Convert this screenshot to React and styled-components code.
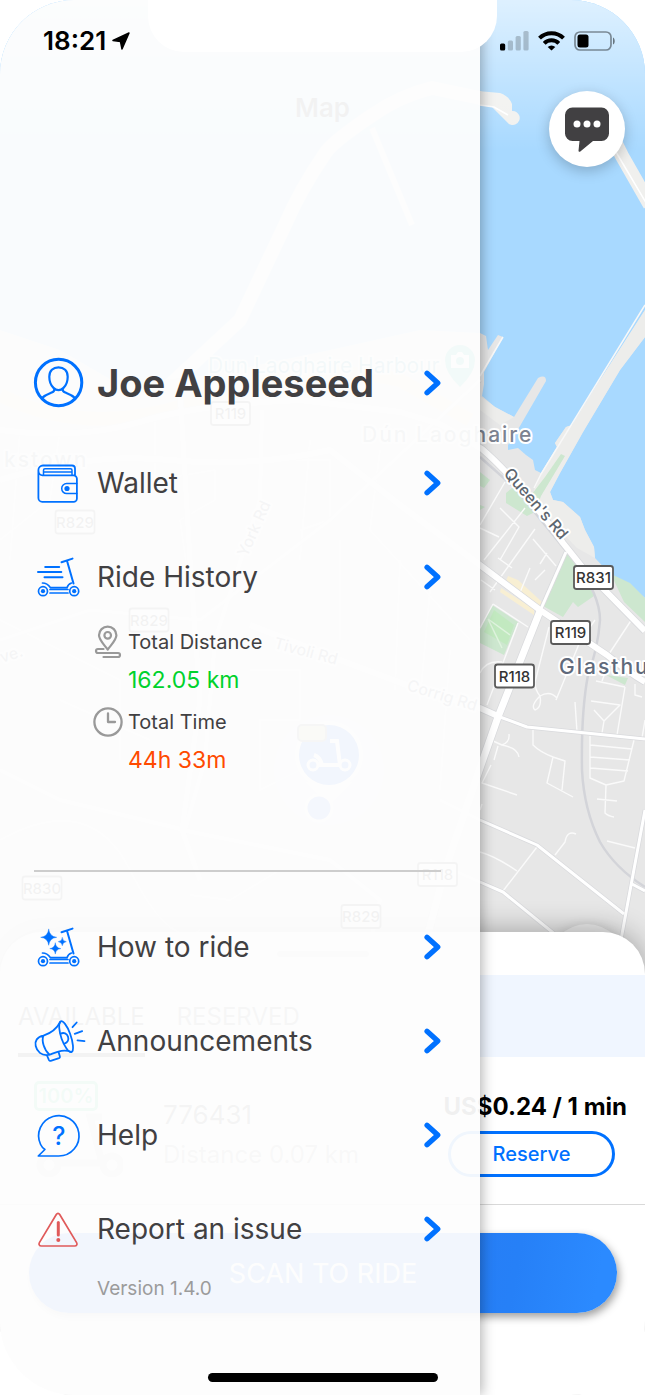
import React from "react";
import styled, { createGlobalStyle } from "styled-components";

const blue = "#0071ff";
const ink = "#414042";

const GlobalStyle = createGlobalStyle`
  *, *::before, *::after { box-sizing: border-box; }
  body {
    margin: 0;
    background: #fff;
    color: ${ink};
    font-family: Inter, "Liberation Sans", sans-serif;
  }
  a { color: inherit; text-decoration: none; }
  button { font: inherit; border: 0; padding: 0; cursor: pointer; }
  svg { display: block; }
`;

/* ---------- shell ---------- */

const Screen = styled.div`
  position: relative;
  display: grid;
  grid-template-columns: minmax(0, 1fr);
  min-height: 100vh;
  overflow: hidden;
  border-radius: 74px;
  background: #fff;
`;

const RideView = styled.main`
  grid-area: 1 / 1;
  display: flex;
  flex-direction: column;
`;

const MapArea = styled.section`
  position: relative;
  flex: 1;
  min-height: 600px;
  background: #a8d9ff;
`;

const MapCanvas = styled.svg`
  position: absolute;
  inset: 0;
  width: 100%;
  height: 100%;
`;

const MapTitle = styled.h1`
  position: relative;
  margin: 0;
  padding-top: 90px;
  text-align: center;
  font-size: 26px;
  line-height: 36px;
  font-weight: 600;
  color: #333;
`;

const RoundButton = styled.button`
  position: absolute;
  right: 20px;
  ${(p) => (p.$low ? "bottom: -20px;" : "top: 91px;")}
  display: grid;
  place-items: center;
  width: 76px;
  height: 76px;
  border-radius: 50%;
  background: ${(p) => (p.$low ? "#ebebeb" : "#fff")};
  box-shadow: 0 4px 14px rgba(0, 0, 0, 0.22);
`;

/* ---------- map labels ---------- */

const TownLabel = styled.text`
  font-size: 21px;
  font-weight: 500;
  letter-spacing: 2px;
  fill: ${(p) => p.$tone || "#606a7b"};
  stroke: #fff;
  stroke-width: 4px;
  stroke-linejoin: round;
  paint-order: stroke;
`;

const RoadLabel = styled.text`
  font-size: 16px;
  font-weight: 500;
  fill: #5d666f;
  stroke: #fff;
  stroke-width: 4px;
  stroke-linejoin: round;
  paint-order: stroke;
`;

const PlaceLabel = styled.text`
  font-size: 21px;
  fill: #3a9bb0;
  stroke: #fff;
  stroke-width: 3px;
  paint-order: stroke;
`;

const ShieldText = styled.text`
  font-size: 15px;
  font-weight: 500;
  text-anchor: middle;
  fill: #333;
`;

/* ---------- bottom sheet ---------- */

const Sheet = styled.section`
  position: relative;
  margin-top: -48px;
  padding-bottom: 82px;
  border-radius: 42px 42px 0 0;
  background: #fff;
  box-shadow: 0 -2px 28px rgba(0, 0, 0, 0.3);
`;

const Grip = styled.div`
  display: flex;
  justify-content: center;
  align-items: center;
  height: 43px;
  &::before {
    content: "";
    width: 92px;
    height: 6px;
    border-radius: 3px;
    background: #ccc;
  }
`;

const Tabs = styled.div`
  display: flex;
  gap: 32px;
  height: 82px;
  padding-left: 18px;
  background: #f0f6ff;
`;

const Tab = styled.button`
  background: none;
  padding-top: 4px;
  border-bottom: 4px solid ${(p) => (p.$on ? "#444" : "transparent")};
  color: ${(p) => (p.$on ? "#555" : "#777")};
  font-size: 24px;
`;

const RideCard = styled.article`
  display: flex;
  justify-content: space-between;
  height: 148px;
  padding: 24px 18px 0 34px;
  border-bottom: 1px solid #d9d9d9;
`;

const Vehicle = styled.div`
  display: flex;
  gap: 40px;
`;

const VehicleArt = styled.div`
  width: 89px;
`;

const Charge = styled.div`
  width: 64px;
  height: 30px;
  border: 3px solid #3bcf8e;
  border-radius: 5px;
  color: #3bcf8e;
  font-size: 20px;
  line-height: 24px;
  font-weight: 600;
  text-align: center;
`;

const VehicleInfo = styled.div`
  width: 240px;
  padding-top: 14px;
  white-space: nowrap;
  font-size: 26px;
  line-height: 40px;
  color: #555;
  small { display: block; font-size: 24px; color: #999; }
`;

const Pricing = styled.div`
  display: flex;
  flex-direction: column;
  align-items: flex-end;
  gap: 8px;
  padding-top: 10px;
  white-space: nowrap;
  font-size: 24px;
  line-height: 32px;
  font-weight: 700;
  color: #000;
`;

const ReserveButton = styled.button`
  width: 167px;
  height: 46px;
  margin-right: 12px;
  border: 3px solid ${blue};
  border-radius: 23px;
  background: #fff;
  color: ${blue};
  font-size: 20px;
  font-weight: 500;
`;

const ScanButton = styled.button`
  display: block;
  width: calc(100% - 57px);
  height: 80px;
  margin: 28px 28px 0 29px;
  border-radius: 40px;
  background: linear-gradient(100deg, #2b6ff0, #2680f7 82%, #2b8aff 96%);
  box-shadow: 2px 4px 8px rgba(0, 0, 0, 0.38);
  color: #fff;
  font-size: 27px;
`;

/* ---------- drawer ---------- */

const Drawer = styled.aside`
  grid-area: 1 / 1;
  position: relative;
  width: calc(100% - 165px);
  padding: 330px 39px 90px 34px;
  background: rgba(253, 253, 253, 0.95);
  box-shadow: 2px 0 12px rgba(0, 0, 0, 0.3);
`;

const MenuRow = styled.a`
  display: grid;
  grid-template-columns: 50px 1fr auto;
  align-items: center;
  column-gap: 13px;
  height: ${(p) => (p.$profile ? "106px" : "94px")};
  white-space: nowrap;
  font-size: ${(p) => (p.$profile ? "38px" : "28px")};
  font-weight: ${(p) => (p.$profile ? 700 : 400)};
`;

const Stats = styled.dl`
  display: grid;
  row-gap: 4px;
  margin: 0;
  padding-left: 59px;
`;

const StatName = styled.dt`
  display: flex;
  align-items: center;
  gap: 5px;
  height: 36px;
  font-size: 20px;
`;

const StatValue = styled.dd`
  margin: 0;
  padding-left: 35px;
  font-size: 23px;
  line-height: 40px;
  color: ${(p) => p.$tone};
`;

const Rule = styled.hr`
  height: 2px;
  margin: 90px 0 28px;
  border: 0;
  background: #cdcdcd;
`;

const Version = styled.p`
  margin: 0;
  padding-left: 63px;
  font-size: 19px;
  line-height: 26px;
  color: #9b9b9b;
`;

/* ---------- device chrome ---------- */

const StatusBar = styled.header`
  position: absolute;
  inset: 0 0 auto 0;
  display: grid;
  grid-template-columns: 1fr 349px 1fr;
  height: 52px;
  color: #000;
`;

const StatusSide = styled.div`
  display: flex;
  align-items: center;
  gap: ${(p) => (p.$end ? "9px" : "6px")};
  padding: 30px 0 0 ${(p) => (p.$end ? "3px" : "43px")};
  font-size: 26px;
  line-height: 22px;
  font-weight: 600;
`;

const Notch = styled.div`
  border-radius: 0 0 36px 36px;
  background: #fff;
`;

const HomeBar = styled.div`
  position: absolute;
  bottom: 13px;
  left: 50%;
  width: 230px;
  height: 9px;
  border-radius: 5px;
  background: #000;
  transform: translateX(-50%);
`;

/* ---------- icons ---------- */

const LineIcon = ({ color = blue, width = 1.8, children }) => (
  <svg width="50" height="50" viewBox="0 0 50 50" fill="none" stroke={color} strokeWidth={width} strokeLinecap="round" strokeLinejoin="round" overflow="visible" aria-hidden="true">
    {children}
  </svg>
);

const PersonIcon = () => (
  <LineIcon width={2.2}>
    <circle cx="24.6" cy="24.5" r="23.2" strokeWidth="3" />
    <path d="M24.5 9.3c-5.4 0-9.2 3.6-9.2 9.4 0 4.6 1.8 8.8 4.2 11.2 1.6 1.6 3.2 2.3 5 2.3s3.4-.7 5-2.3c2.4-2.4 4.2-6.6 4.2-11.2 0-5.8-3.8-9.4-9.2-9.4z" />
    <path d="M20.3 31c.4 1.7-.8 2.800-2.600 3.600-3.300 1.400-6.700 2.500-9.200 5M28.700 31c-.4 1.700.8 2.800 2.600 3.600 3.300 1.400 6.700 2.500 9.200 5" />
  </LineIcon>
);

const WalletIcon = () => (
  <LineIcon width={1.8}>
    <path d="M41 17.3V10.5a3 3 0 0 0-3-3H9a4.6 4.6 0 0 0-4.6 4.6V40a3.8 3.8 0 0 0 3.8 3.8h31.3a3.4 3.4 0 0 0 3.4-3.4V20.7a3.4 3.4 0 0 0-3.4-3.4H8.5a4 4 0 0 1-4-4" />
    <path d="M9.500 17V12.300a1.500 1.500 0 0 1 1.500-1.500h25.500a1.500 1.500 0 0 1 1.500 1.500V17M10 14h27.500M42.800 25.600H32.700a5 5 0 0 0 0 10h10.100" strokeWidth="1.500" />
    <circle cx="33" cy="30.500" r="2.600" fill={blue} stroke="none" />
  </LineIcon>
);

const ScooterBody = () => (
  <>
    <circle cx="9" cy="39.2" r="4.5" />
    <circle cx="9" cy="39.2" r="2.1" fill={blue} stroke="none" />
    <circle cx="40.2" cy="39.2" r="4.5" />
    <circle cx="40.2" cy="39.2" r="2.1" fill={blue} stroke="none" />
    <path d="M8.5 31c4.600 0 6.300 2.300 8 4.700h16.500c.7-2.500 2.300-4 4.500-4.700M16 37.500h18M16 41h18" />
    <path d="M39.500 31.500 33 8.700M27.500 10.300l11-3.700" strokeWidth="2" />
  </>
);

const RideIcon = () => (
  <LineIcon width={1.7}>
    <ScooterBody />
    <path d="M11.2 15h14M4 20h23.3M10.5 25.2h18" strokeWidth="2" />
  </LineIcon>
);

const star = (x, y, r) => {
  const k = r * 0.2;
  return `M${x} ${y - r}Q${x + k / 2} ${y - k / 2} ${x + r} ${y}Q${x + k / 2} ${y + k / 2} ${x} ${y + r}Q${x - k / 2} ${y + k / 2} ${x - r} ${y}Q${x - k / 2} ${y - k / 2} ${x} ${y - r}z`;
};

const HowToIcon = () => (
  <LineIcon width={1.7}>
    <ScooterBody />
    <path d={star(14.7, 15.3, 8) + star(28.3, 19.7, 4) + star(21.3, 26.6, 5.5)} fill={blue} strokeWidth=".4" />
  </LineIcon>
);

const MegaphoneIcon = () => (
  <LineIcon width={1.8}>
    <path d="M26.5 5.5c2.200-1.800 6.600 4 9.600 12.200s4.100 17.200 1.400 18.300c-2.700 1-7.300-6-9.900-13.300S24.300 7.300 26.500 5.500z" />
    <path d="M26.300 6C22 14 16 17.500 9.500 19.600M37.500 36c-8.500-3.400-15.500.4-22 2.700M9.500 19.600C3 20.800.6 25 1.700 30s5.500 10.500 13.800 8.700M9.500 19.600c-2.300 5 .6 14.500 6 19.100" />
    <path d="M13 39.500l2 4.600c.4.700.9.900 1.700.7l8.300-2.700c.8-.3 1.100-.8.900-1.600l-1.300-4.200M26.500 17.700c3.400-1.600 6.400-.2 7.500 2.900 1.100 3.200-.3 6-3.500 7M38.500 11.200 42.700 6.500M40.700 17.800l7.500-2.700M43.500 24.400l7 .8" />
  </LineIcon>
);

const HelpMark = styled.text`
  font-size: 25px;
  font-weight: 500;
  text-anchor: middle;
  fill: ${blue};
  stroke: none;
`;

const HelpIcon = () => (
  <LineIcon width={1.7}>
    <path d="M24.8 46A20.2 20.2 0 1 0 6.6 34.5c1 2.2 2.3 3.6 4.3 5L4.300 46z" />
    <HelpMark x="24.8" y="35">?</HelpMark>
  </LineIcon>
);

const WarningIcon = () => (
  <LineIcon color="#e05a5a" width={1.7}>
    <path d="M22.300 10.500 5.400 38.600c-1 1.700-.1 3.400 1.900 3.400h33.400c2 0 2.900-1.700 1.900-3.400L25.700 10.500c-.9-1.500-2.500-1.500-3.400 0z" />
    <path d="M24.3 18.5V31" strokeWidth="3" />
    <circle cx="24.3" cy="36" r="2" fill="#e05a5a" stroke="none" />
  </LineIcon>
);

const Chevron = () => (
  <svg width="18" height="28" viewBox="0 0 18 28" fill="none" stroke={blue} strokeWidth="5.2" strokeLinecap="round" strokeLinejoin="round" aria-hidden="true">
    <path d="M4 4.200l10.800 9.800L4 23.800" />
  </svg>
);

const DistanceIcon = () => (
  <svg width="30" height="34" viewBox="0 0 30 34" fill="none" stroke="#999" strokeWidth="2.2" strokeLinecap="round" strokeLinejoin="round" aria-hidden="true">
    <path d="M14.7 24.5C11 19.5 6 15 6 10.3a8.7 8.7 0 0 1 17.4 0c0 4.7-5 9.2-8.7 14.2z" />
    <circle cx="14.7" cy="10.3" r="3.3" />
    <path d="M10.500 24H5a2 2 0 0 0 0 4h20a2 2 0 0 1 0 4H10.500" />
  </svg>
);

const ClockIcon = () => (
  <svg width="30" height="30" viewBox="0 0 30 30" fill="none" stroke="#999" strokeWidth="2.3" strokeLinecap="round" strokeLinejoin="round" aria-hidden="true">
    <circle cx="15" cy="15" r="13.6" />
    <path d="M15 6.500V15h7" />
  </svg>
);

const ChatIcon = () => (
  <svg width="46" height="46" viewBox="0 0 46 46" aria-hidden="true">
    <path d="M8.5 1.500h29a7.500 7.500 0 0 1 7.500 7.500v18.500a7.500 7.500 0 0 1-7.500 7.500H29L16 45.700q-1.500.5-1.500-1L15.500 35h-7A7.500 7.500 0 0 1 1 27.500V9a7.500 7.500 0 0 1 7.500-7.500z" fill={ink} />
    <g fill="#fff">
      <circle cx="13" cy="18" r="3.5" />
      <circle cx="23" cy="18" r="3.5" />
      <circle cx="33" cy="18" r="3.5" />
    </g>
  </svg>
);

const LocationIcon = () => (
  <svg width="18" height="18" viewBox="0 0 18 18" aria-hidden="true">
    <path d="M17 1 10 17 8.500 9.500 1 8.500z" fill="#000" stroke="#000" strokeWidth="1.5" strokeLinejoin="round" />
  </svg>
);

const SignalIcon = () => (
  <svg width="29" height="20" viewBox="0 0 29 20" fill="rgba(0,0,0,.2)" aria-hidden="true">
    <rect x="0" y="12.5" width="5.2" height="7" rx="1.5" fill="#000" />
    <rect x="7.8" y="9.5" width="5.2" height="10" rx="1.5" />
    <rect x="15.6" y="5" width="5.2" height="14.5" rx="1.5" />
    <rect x="23.4" y="0" width="5.2" height="19.5" rx="1.5" />
  </svg>
);

const WifiIcon = () => (
  <svg width="27" height="20" viewBox="0 0 27 20" fill="none" stroke="#000" strokeWidth="4" aria-hidden="true">
    <path d="M1.500 7.100a17 17 0 0 1 24 0M6.200 12.300a10.400 10.400 0 0 1 14.600 0" />
    <path d="M13.500 19.500 9.700 15.900a5.500 5.500 0 0 1 7.600 0z" fill="#000" stroke="none" />
  </svg>
);

const BatteryIcon = () => (
  <svg width="42" height="20" viewBox="0 0 42 20" fill="none" aria-hidden="true">
    <rect x="1" y="1" width="36" height="18" rx="5" stroke="#000" strokeOpacity=".42" strokeWidth="1.7" />
    <rect x="3.5" y="3.5" width="11" height="13" rx="2.5" fill="#000" />
    <path d="M39 6.500c2.300 1 2.300 6 0 7z" fill="#000" fillOpacity=".5" />
  </svg>
);

const ParkedScooter = () => (
  <svg width="89" height="66" viewBox="0 0 89 66" fill="none" stroke="#ccc" strokeWidth="7" aria-hidden="true">
    <circle cx="15" cy="54" r="9" />
    <circle cx="78" cy="54" r="9" />
    <path d="M24 52h44L56 6h12" />
  </svg>
);

/* ---------- map ---------- */

const shields = [
  ["R831", 593.5, 577.5],
  ["R119", 570.5, 632.5],
  ["R118", 514.5, 676],
  ["R119", 230.5, 413.5],
  ["R829", 75, 522],
  ["R829", 149, 620],
  ["R830", 42, 888],
  ["R118", 437.5, 874.5],
  ["R829", 361, 916.5],
];

const mainRoads = [
  ["M566 552L540 611", 3],
  ["M0 430Q80 440 140 422T300 400L400 412L440 424L482 449Q518 480 563 543L583 568L645 631", 6],
  ["M0 480Q90 452 170 460T330 450L400 505L480 565L540 610L607 655Q628 672 645 682", 6],
  ["M540 611L498 717L480 768L445 870L425 945", 7],
  ["M180 390L190 560L200 700L182 830L200 880", 5],
  ["M262 410L260 500L215 640L205 760L185 830L60 800L0 770", 4],
  ["M250 625L340 660L420 690L480 708L500 717", 6],
  ["M500 717L527 727L645 739", 3],
  ["M0 640L90 610L200 620L330 520L480 380", 3],
  ["M182 830L330 860L380 900L370 945", 4],
  ["M440 800L480 820L537 845L624 914", 3],
  ["M430 860L480 882L503 892L562 940", 3],
  ["M645 810L632 880L620 945M632 884L645 891", 3],
];

const lanes =
  "M480 525L505 482M484 560L525 508M500 508L519 527L500 560M480 528L499 537M498 558L512 568M533 539L556 566M547 553L540 564M519 595L530 568M481 580L495 590M493 604L528 627M493 604L480 628M518 623L487 705M549 627L535 682Q535 690 540 696Q542 708 535 710Q530 706 540 696Q550 690 557 698M579 644L556 700M480 673Q486 660 502 662M575 702L577 732M533 730L533 745Q540 752 553 757L547 783L573 797M553 757L565 761L562 790M493 741L502 745Q510 742 509 734M502 745Q518 748 519 757M498 746L494 760M491 765L482 783L517 795M480 810L482 804M590 736L590 778L606 785L624 781L634 740M590 745L632 749M590 757L630 760M590 768L628 771M606 785L605 813Q608 816 614 817M597 799L617 801M555 855L565 842Q567 830 576 834M537 847L503 891M480 852Q495 856 517 871M607 841L635 848M607 657L632 619M595 620L588 630M596 681L625 687M591 701L620 705L604 721L594 710M604 721L602 733M625 687L617 735M635 684L635 695L642 697M645 720L642 738M602 681L607 668M535 529L490 592M535 580L545 570";

const hiddenLanes =
  "M20 430L10 560M60 430L50 500L0 540M155 420V480L215 470V500L180 520L190 590M260 460H330V520L300 530M310 440L300 560M380 450L370 530L470 640M0 620L120 680V760M250 670H300V720H260V790L300 770M400 560L395 690M430 590L420 700M340 540V640M0 840Q90 790 130 870T200 930M280 870L230 900L190 895M450 650L440 790M60 700L150 740";

const CityMap = () => (
  <MapCanvas viewBox="0 0 645 980" preserveAspectRatio="xMinYMin slice" role="img" aria-label="Map of Dún Laoghaire">
    <defs>
      <linearGradient id="haze" x1="0" y1="0" x2="0" y2="1">
        <stop offset="0" stopColor="#fff" stopOpacity=".62" />
        <stop offset="1" stopColor="#fff" stopOpacity="0" />
      </linearGradient>
    </defs>
    <rect width="645" height="980" fill="#a8d9ff" />
    <g fill="none" stroke="#f0f0ee" strokeLinejoin="round">
      <path d="M480 98L432 88Q400 96 374 114Q335 140 326 152Q300 190 285 225L240 320L170 385" strokeWidth="14" />
      <path d="M372 128L412 225" strokeWidth="6" />
      <path d="M612 136L622 156L650 205" strokeWidth="14" />
    </g>
    <path d="M478 91L500 93Q509 96 512 104L512 111A7 7 0 1 1 507 122L492 107L478 105Z" fill="#f0f0ee" />
    <path d="M480 105L494 107L508 115M616 152L648 206" fill="none" stroke="#fff" strokeWidth="1.500" />
    <path
      d="M0 330L60 350L120 385L210 375L330 350L420 330L480 333L486 336L488 350L498 335L503 337L484 372V384L482 396L495 407L514 417L538 378Q546 374 546 381L520 426L508 445V450L518 448L526 455L533 460L535 470L541 473L557 447L555 443L566 427L572 425L598 383L601 379L645 310V337L620 370L583 432L560 473L550 492L553 500L563 502L580 517L585 530L594 547L595 558L613 577L630 586L645 598V980H0Z"
      fill="#e7e7e7"
    />
    <path d="M566 427L572 425L598 383L645 310V337L620 370L583 432L560 473L550 492L553 500L563 502L580 517L585 530L594 547L595 558L577 548L545 515L534 490L541 473L557 447L555 443ZM480 396L495 407L514 417L500 425L480 410Z" fill="#ededeb" />
    <path d="M0 395Q90 440 200 400T400 380L470 420" fill="none" stroke="#f6edc8" strokeWidth="14" />
    <g fill="#cde7cf">
      <path d="M561 454L565 456L541 496L535 512L527 516L506 503V493L512 488L532 494L545 477Z" />
      <path d="M566 553L584 575L594 596L578 607L573 602L563 617L543 606Z" />
      <path d="M611 574L630 583L645 598V622L624 602Z" />
      <path d="M480 472L490 480L484 488L480 486ZM480 505L485 507L480 510ZM492 605L518 622L504 655L480 643V630Z" />
      <path d="M606 675L628 678L625 685Z" />
    </g>
    <path d="M494 610L514 625L507 645L484 632Z" fill="#c2e9c0" />
    <path d="M488 619L502 648M488 619L510 635" stroke="#dff3de" strokeWidth="1.500" />
    <path d="M508 576L518 580L542 602L540 606L520 594L506 581ZM501 588L534 609V615L500 592Z" fill="#f8efd3" />
    <path d="M645 305L541 474L534 488M503 337L480 376" fill="none" stroke="#f8f8f8" strokeWidth="1.500" />
    <path d={lanes + hiddenLanes} fill="none" stroke="#fafafa" strokeWidth="1.400" strokeLinejoin="round" />
    <path d="M480 457L515 488L575 562Q600 595 600 620Q598 648 588 675Q581 712 582 770Q584 810 600 842Q615 868 645 887" fill="none" stroke="#d3d4d9" strokeWidth="2.500" />
    {mainRoads.map(([d, w]) => (
      <path key={d} d={d} fill="none" stroke="#d9dadd" strokeWidth={w + 1.5} strokeLinejoin="round" />
    ))}
    {mainRoads.map(([d, w]) => (
      <path key={d} d={d} fill="none" stroke="#fff" strokeWidth={w} strokeLinejoin="round" />
    ))}

    <g transform="translate(460 365)">
      <path d="M0 22Q-15 8-15-5A15 15 0 0 1 15-5Q15 8 0 22Z" fill="#34bfa6" />
      <path d="M-9-10h5l2-3h4l2 3h5V3H-9Z" fill="#fff" />
      <circle cy="-4" r="4" fill="#34bfa6" />
    </g>
    <g>
      <circle cx="329" cy="770" r="55" fill="#d6e2fb" opacity=".5" />
      <path d="M329 805L306 782H352Z" fill="#fff" />
      <circle cx="319" cy="808" r="13" fill="#5b86f5" stroke="#fff" strokeWidth="3" />
      <circle cx="329" cy="755" r="34" fill="#fff" />
      <circle cx="329" cy="755" r="30" fill="#2d70f5" />
      <path d="M318 765H340L337 741H330M314 755Q320 757 322 765" fill="none" stroke="#fff" strokeWidth="4" />
      <circle cx="313" cy="765" r="5" fill="#2d70f5" stroke="#fff" strokeWidth="3" />
      <circle cx="345" cy="765" r="5" fill="#2d70f5" stroke="#fff" strokeWidth="3" />
      <rect x="298" y="725" width="28" height="16" rx="4" fill="#b8c98a" stroke="#777" strokeWidth="2" />
    </g>

    <PlaceLabel x="208" y="373">Dun Laoghaire Harbour</PlaceLabel>
    <TownLabel x="362" y="442" $tone="#7c8391">Dún Laoghaire</TownLabel>
    <TownLabel x="559" y="674">Glasthule</TownLabel>
    <TownLabel x="4" y="467" $tone="#7c8391">kstown</TownLabel>
    <RoadLabel transform="translate(503 474) rotate(49)">Queen's Rd</RoadLabel>
    <RoadLabel transform="translate(247 558) rotate(-66)">York Rd</RoadLabel>
    <RoadLabel transform="translate(273 648) rotate(15)">Tivoli Rd</RoadLabel>
    <RoadLabel transform="translate(406 690) rotate(17)">Corrig Rd</RoadLabel>
    <RoadLabel transform="translate(2 663) rotate(-18)">ve.</RoadLabel>
    {shields.map(([name, x, y]) => (
      <g key={name + x} transform={`translate(${x} ${y})`}>
        <rect x="-19.5" y="-11.5" width="39" height="23" rx="2.5" fill="#fff" stroke="#5a5a5a" strokeWidth="1.8" />
        <ShieldText y="5.5">{name}</ShieldText>
      </g>
    ))}
    <rect width="645" height="150" fill="url(#haze)" />
  </MapCanvas>
);

/* ---------- page ---------- */

const MenuItem = ({ icon, children, profile }) => (
  <MenuRow href="#" $profile={profile}>
    {icon}
    <span>{children}</span>
    <Chevron />
  </MenuRow>
);

export default function App() {
  return (
    <Screen>
      <GlobalStyle />
      <RideView>
        <MapArea>
          <CityMap />
          <MapTitle>Map</MapTitle>
          <RoundButton aria-label="Chat"><ChatIcon /></RoundButton>
          <RoundButton $low aria-label="My location" />
        </MapArea>
        <Sheet>
          <Grip />
          <Tabs>
            <Tab $on>AVAILABLE</Tab>
            <Tab>RESERVED</Tab>
          </Tabs>
          <RideCard>
            <Vehicle>
              <VehicleArt>
                <Charge>100%</Charge>
                <ParkedScooter />
              </VehicleArt>
              <VehicleInfo>
                776431
                <small>Distance 0.07 km</small>
              </VehicleInfo>
            </Vehicle>
            <Pricing>
              <span>US$0.24 / 1 min</span>
              <ReserveButton>Reserve</ReserveButton>
            </Pricing>
          </RideCard>
          <ScanButton>SCAN TO RIDE</ScanButton>
        </Sheet>
      </RideView>

      <Drawer>
        <nav>
          <MenuItem profile icon={<PersonIcon />}>Joe Appleseed</MenuItem>
          <MenuItem icon={<WalletIcon />}>Wallet</MenuItem>
          <MenuItem icon={<RideIcon />}>Ride History</MenuItem>
          <Stats>
            <div>
              <StatName><DistanceIcon />Total Distance</StatName>
              <StatValue $tone="#00d22d">162.05 km</StatValue>
            </div>
            <div>
              <StatName><ClockIcon />Total Time</StatName>
              <StatValue $tone="#ff4a00">44h 33m</StatValue>
            </div>
          </Stats>
          <Rule />
          <MenuItem icon={<HowToIcon />}>How to ride</MenuItem>
          <MenuItem icon={<MegaphoneIcon />}>Announcements</MenuItem>
          <MenuItem icon={<HelpIcon />}>Help</MenuItem>
          <MenuItem icon={<WarningIcon />}>Report an issue</MenuItem>
        </nav>
        <Version>Version 1.4.0</Version>
      </Drawer>

      <StatusBar>
        <StatusSide>18:21<LocationIcon /></StatusSide>
        <Notch />
        <StatusSide $end><SignalIcon /><WifiIcon /><BatteryIcon /></StatusSide>
      </StatusBar>
      <HomeBar />
    </Screen>
  );
}
